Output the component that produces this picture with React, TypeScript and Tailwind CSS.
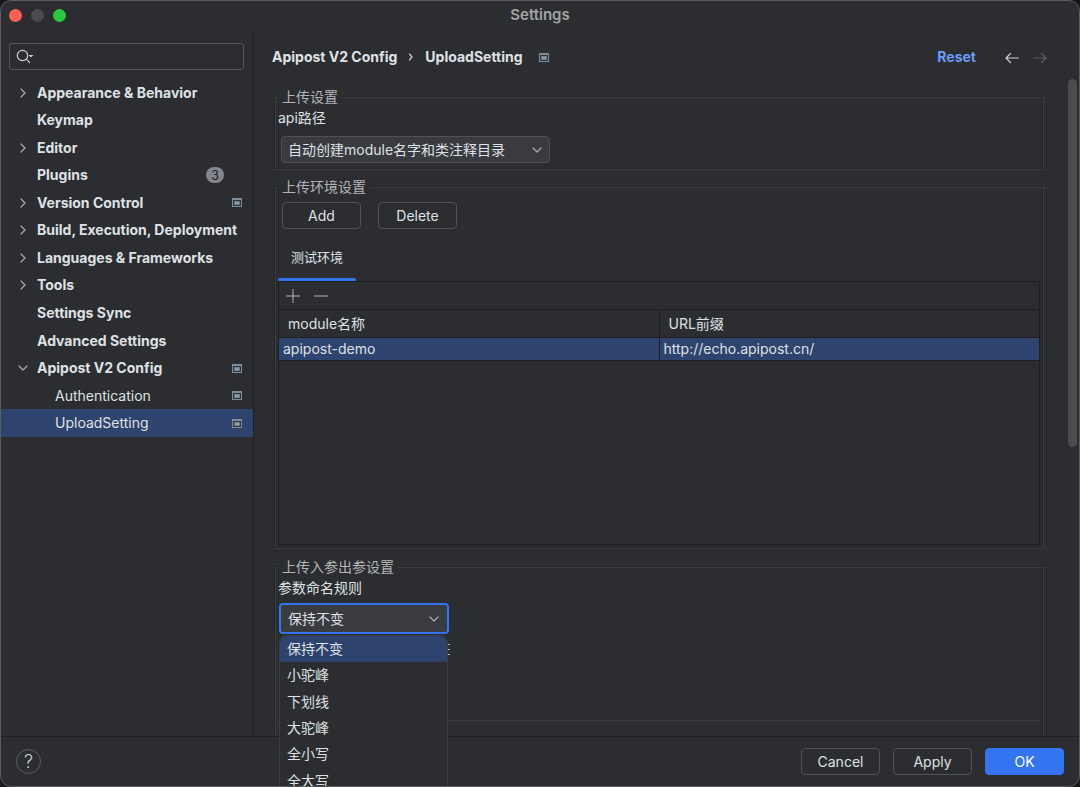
import type { ReactNode } from "react";

type TreeItem = {
  label: string;
  state?: "closed" | "open";
  badge?: string;
  project?: boolean;
  child?: boolean;
  selected?: boolean;
};

const tree: TreeItem[] = [
  { label: "Appearance & Behavior", state: "closed" },
  { label: "Keymap" },
  { label: "Editor", state: "closed" },
  { label: "Plugins", badge: "3" },
  { label: "Version Control", state: "closed", project: true },
  { label: "Build, Execution, Deployment", state: "closed" },
  { label: "Languages & Frameworks", state: "closed" },
  { label: "Tools", state: "closed" },
  { label: "Settings Sync" },
  { label: "Advanced Settings" },
  { label: "Apipost V2 Config", state: "open", project: true },
  { label: "Authentication", child: true, project: true },
  { label: "UploadSetting", child: true, project: true, selected: true },
];

const namingRules = ["保持不变", "小驼峰", "下划线", "大驼峰", "全小写", "全大写"];

function Chevron({ open, className = "" }: { open?: boolean; className?: string }) {
  return (
    <svg viewBox="0 0 12 12" className={`size-3 shrink-0 fill-none stroke-[#a9abb0] ${className}`} strokeWidth="1.2" strokeLinecap="round" strokeLinejoin="round" aria-hidden="true">
      <path d={open ? "M2 4l4 4 4-4" : "M4 2l4 4-4 4"} />
    </svg>
  );
}

function ProjectIcon() {
  return (
    <svg viewBox="0 0 10 9" className="h-[9px] w-2.5 shrink-0" aria-hidden="true">
      <path d="M0 0h10v9H0z" fill="#7e8b98" />
      <path d="M1 2h8v6H1z" fill="#2f353e" />
      <path d="M2.300 3.200h5.400v3.600H2.300z" fill="#8a9bab" />
    </svg>
  );
}

function Group({ title, className = "", children }: { title: string; className?: string; children: ReactNode }) {
  return (
    <fieldset className={`min-w-0 border-2 border-[#64666a4d] px-0.5 [border-style:groove] ${className}`}>
      <legend className="px-1 leading-5 text-[#b4b5b9]">{title}</legend>
      {children}
    </fieldset>
  );
}

function Button({ primary, children }: { primary?: boolean; children: ReactNode }) {
  return (
    <button
      type="button"
      className={`h-[27px] w-[79px] rounded-[4px] border text-center ${primary ? "border-[#3574f0] bg-[#3574f0] text-white" : "border-[#4e5157]"}`}
    >
      {children}
    </button>
  );
}

export default function App() {
  return (
    <div className="h-screen overflow-hidden bg-[#17181a] font-['Inter','Noto_Sans_CJK_SC',sans-serif] text-sm text-[#dfe1e5]">
      <div className="flex h-full flex-col overflow-hidden rounded-[11px] border border-[#5a5c5f] bg-[#2b2d30]">
        <header className="relative flex h-[30px] shrink-0 items-center px-2 pb-0.5">
          <div className="absolute flex gap-[9px]">
            <button type="button" aria-label="Close" className="size-[13px] rounded-full bg-[#ff5f57]" />
            <button type="button" aria-label="Minimize" className="size-[13px] rounded-full bg-[#4b4c4e]" />
            <button type="button" aria-label="Zoom" className="size-[13px] rounded-full bg-[#28c840]" />
          </div>
          <h1 className="flex-1 text-center text-[15px] font-semibold text-[#a2a3a5]">Settings</h1>
        </header>

        <div className="flex min-h-0 flex-1">
          <aside className="w-[253px] shrink-0 border-r border-[#1f2023]">
            <label className="mt-3 mr-[9px] ml-2 flex h-[27px] items-center rounded-[3px] border border-[#55575c] pl-1.5">
              <svg viewBox="0 0 19 16" className="h-4 w-[19px] shrink-0 fill-none stroke-[#ced0d6]" strokeWidth="1.2" strokeLinecap="round" aria-hidden="true">
                <circle cx="6.500" cy="6.500" r="5.200" />
                <path d="M10.400 10.400l3.300 3.300" />
                <path d="M12.500 6h5l-2.500 2.500z" fill="#ced0d6" stroke="none" />
              </svg>
              <input type="text" aria-label="Search settings" className="min-w-0 flex-1 bg-transparent px-1 outline-none" />
            </label>
            <ul className="mt-[9px] flex h-[358px] flex-col">
              {tree.map((item) => (
                <li key={item.label} className="flex-1">
                  <a
                    href="#"
                    className={`flex h-full items-center pr-[11px] whitespace-nowrap ${item.child ? "pl-[54px]" : "pl-4 font-bold"} ${item.selected ? "bg-[#2e436e]" : ""}`}
                  >
                    {!item.child && (
                      <span className="w-5 shrink-0">{item.state && <Chevron open={item.state === "open"} />}</span>
                    )}
                    <span className="flex-1">{item.label}</span>
                    {item.badge && (
                      <span className="mr-[18px] flex h-4 w-[18px] items-center justify-center rounded-full bg-[#84878d] text-[13px] font-normal text-[#1e1f22]">
                        {item.badge}
                      </span>
                    )}
                    {item.project && <ProjectIcon />}
                  </a>
                </li>
              ))}
            </ul>
          </aside>

          <main className="flex min-w-0 flex-1 flex-col">
            <div className="flex h-12 shrink-0 items-center pt-1 pr-8 pl-[18px] font-bold">
              <span>Apipost V2 Config</span>
              <svg viewBox="0 0 6 8" className="mx-[11px] h-2 w-1.5 fill-none stroke-[#ced0d6]" strokeWidth="1.2" strokeLinecap="round" aria-hidden="true">
                <path d="M1.500 1l2.500 3-2.500 3" />
              </svg>
              <span className="mr-4">UploadSetting</span>
              <ProjectIcon />
              <a href="#" className="mr-[29px] ml-auto text-[#6b9bfa]">Reset</a>
              <button type="button" aria-label="Back" className="mr-3.5 pt-0.5">
                <svg viewBox="0 0 14 12" className="h-3 w-3.5 fill-none stroke-[#ced0d6]" strokeWidth="1.2" strokeLinecap="round" strokeLinejoin="round">
                  <path d="M13.300 6H1M5.500 1.500L1 6l4.500 4.500" />
                </svg>
              </button>
              <button type="button" aria-label="Forward" className="pt-0.5">
                <svg viewBox="0 0 14 12" className="h-3 w-3.5 fill-none stroke-[#5a5d63]" strokeWidth="1.2" strokeLinecap="round" strokeLinejoin="round">
                  <path d="M.700 6H13M8.500 1.500L13 6l-4.500 4.500" />
                </svg>
              </button>
            </div>

            <div className="flex min-h-0 flex-1 pr-0.5">
              <div className="flex min-w-0 flex-1 flex-col pt-2 pr-6 pl-5">
                <Group title="上传设置">
                  <label htmlFor="api-path" className="block leading-[22px]">api路径</label>
                  <div className="relative mt-[7px] mb-[5px] ml-[3px] w-[269px]">
                    <select id="api-path" className="h-[27px] w-full appearance-none rounded-[4px] border border-[#4e5157] bg-[#393b40] px-1.5">
                      <option>自动创建module名字和类注释目录</option>
                    </select>
                    <Chevron open className="pointer-events-none absolute top-2 right-[7px]" />
                  </div>
                </Group>

                <Group title="上传环境设置" className="mt-[7px]">
                  <div className="mt-[5px] ml-1 flex gap-[17px]">
                    <Button>Add</Button>
                    <Button>Delete</Button>
                  </div>
                  <div role="tablist" className="mt-2 flex h-11">
                    <button type="button" role="tab" aria-selected="true" className="relative px-[13px] pb-1 text-[13px]">
                      测试环境
                      <span className="absolute inset-x-0 bottom-0 h-[3px] rounded-full bg-[#3574f0]" />
                    </button>
                  </div>
                  <div className="mb-0.5 h-[264px] border border-[#1e1f22]">
                    <div className="flex h-[27px] items-center gap-3 px-1.5">
                      <button type="button" aria-label="Add row">
                        <svg viewBox="0 0 16 16" className="size-4 stroke-[#b4b6bb]"><path d="M1 8h14M8 1v14" /></svg>
                      </button>
                      <button type="button" aria-label="Remove row">
                        <svg viewBox="0 0 16 16" className="size-4 stroke-[#b4b6bb]"><path d="M1 8h14" /></svg>
                      </button>
                    </div>
                    <table className="w-full table-fixed border-collapse text-left">
                      <thead>
                        <tr className="h-7 border-y border-[#1e1f22]">
                          <th className="border-r border-[#1e1f22] px-[9px] font-normal">module名称</th>
                          <th className="px-[9px] font-normal">URL前缀</th>
                        </tr>
                      </thead>
                      <tbody>
                        <tr className="h-[23px] border-b border-[#1e1f22] bg-[#2e436e]">
                          <td className="border-r border-[#1e1f22] px-1">apipost-demo</td>
                          <td className="px-1">http://echo.apipost.cn/</td>
                        </tr>
                      </tbody>
                    </table>
                  </div>
                </Group>

                <Group title="上传入参出参设置" className="mt-2 flex-1 border-b-0">
                  <label htmlFor="naming" className="block leading-[22px]">参数命名规则</label>
                  <div className="relative mt-1 ml-px w-[170px]">
                    <select id="naming" className="h-[31px] w-full appearance-none rounded-[4px] border-2 border-[#3574f0] bg-[#393b40] px-[7px]">
                      {namingRules.map((rule) => (
                        <option key={rule}>{rule}</option>
                      ))}
                    </select>
                    <Chevron open className="pointer-events-none absolute top-2.5 right-[9px]" />
                    <svg viewBox="0 0 2 12" className="absolute top-[41px] -right-px h-3 w-0.5 fill-[#b4b6bb]" aria-hidden="true">
                      <path d="M0 0h2v1H0zM0 5h2v1H0zM0 10h2v1H0z" />
                    </svg>
                    <ul role="listbox" aria-label="参数命名规则" className="absolute top-8 left-0 z-10 flex h-40 w-[169px] flex-col overflow-hidden rounded-t-lg border border-[#3c3e42] bg-[#2b2d30]">
                      {namingRules.map((rule, index) => (
                        <li key={rule} role="option" aria-selected={index === 0} className={`flex flex-1 items-center px-[7px] ${index === 0 ? "bg-[#2e436e]" : ""}`}>
                          {rule}
                        </li>
                      ))}
                    </ul>
                  </div>
                  <div className="mt-[86px] border-b border-[#3c3d41]" />
                </Group>
              </div>
              <div className="h-[368px] w-[9px] rounded-full bg-[#4b4c4e]" />
            </div>
          </main>
        </div>

        <footer className="flex h-[50px] shrink-0 items-center gap-[13px] border-t border-[#1e1f22] px-[15px]">
          <button type="button" aria-label="Help" className="mr-auto flex size-[25px] items-center justify-center rounded-full border border-[#5a5d63] text-lg leading-none font-light text-[#ced0d6]">
            ?
          </button>
          <Button>Cancel</Button>
          <Button>Apply</Button>
          <Button primary>OK</Button>
        </footer>
      </div>
    </div>
  );
}
